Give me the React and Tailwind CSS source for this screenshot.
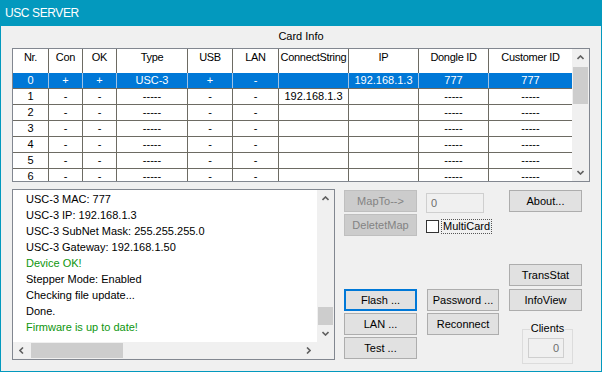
const FONT = "font-['Liberation_Sans',Arial,sans-serif]"

const COLS = [
  { label: 'Nr.', w: 'w-[36px]' },
  { label: 'Con', w: 'w-[34px]' },
  { label: 'OK', w: 'w-[34px]' },
  { label: 'Type', w: 'w-[71px]' },
  { label: 'USB', w: 'w-[45px]' },
  { label: 'LAN', w: 'w-[46px]' },
  { label: 'ConnectString', w: 'w-[70px]' },
  { label: 'IP', w: 'w-[70px]' },
  { label: 'Dongle ID', w: 'w-[70px]' },
  { label: 'Customer ID', w: 'w-[83px]' },
]

const ROWS = [
  ['0', '+', '+', 'USC-3', '+', '-', '', '192.168.1.3', '777', '777'],
  ['1', '-', '-', '-----', '-', '-', '192.168.1.3', '', '-----', '-----'],
  ['2', '-', '-', '-----', '-', '-', '', '', '-----', '-----'],
  ['3', '-', '-', '-----', '-', '-', '', '', '-----', '-----'],
  ['4', '-', '-', '-----', '-', '-', '', '', '-----', '-----'],
  ['5', '-', '-', '-----', '-', '-', '', '', '-----', '-----'],
  ['6', '-', '-', '-----', '-', '-', '', '', '-----', '-----'],
]

const LOG = [
  { t: 'USC-3 MAC: 777' },
  { t: 'USC-3 IP: 192.168.1.3' },
  { t: 'USC-3 SubNet Mask: 255.255.255.0' },
  { t: 'USC-3 Gateway: 192.168.1.50' },
  { t: 'Device OK!', ok: true },
  { t: 'Stepper Mode: Enabled' },
  { t: 'Checking file update...' },
  { t: 'Done.' },
  { t: 'Firmware is up to date!', ok: true },
]

function Chevron({ dir }) {
  const pts = {
    up: '0.5,4 3.5,1 6.5,4',
    down: '0.5,1 3.5,4 6.5,1',
    left: '4,0.5 1,3.5 4,6.5',
    right: '1,0.5 4,3.5 1,6.5',
  }[dir]
  const vert = dir === 'up' || dir === 'down'
  return (
    <svg width={vert ? 7 : 5} height={vert ? 5 : 7} viewBox={vert ? '0 0 7 5' : '0 0 5 7'}>
      <polyline points={pts} fill="none" stroke="#606060" strokeWidth="1.6" />
    </svg>
  )
}

function ArrowBox({ dir }) {
  return (
    <div className="w-[17px] h-[17px] shrink-0 flex items-center justify-center">
      <Chevron dir={dir} />
    </div>
  )
}

function Btn({ children, disabled, focus, className = '' }) {
  let look = 'bg-[#e1e1e1] border border-[#adadad] text-black'
  if (disabled) look = 'bg-[#cccccc] border border-[#bfbfbf] text-[#838383]'
  if (focus) look = 'bg-[#e1e1e1] border-2 border-[#0078d7] text-black'
  return (
    <div className={`h-[22px] flex items-center justify-center leading-[13px] whitespace-nowrap ${look} ${className}`}>
      {children}
    </div>
  )
}

export default function App() {
  return (
    <div className={`${FONT} text-[11px] text-black w-[602px] h-[372px] bg-[#f0f0f0] border-x border-b border-[#0399be] flex flex-col overflow-hidden`}>
      {/* Title bar */}
      <div className="h-[26px] shrink-0 bg-[#0399be] -mx-px flex items-center pl-[5px] text-white text-[12px] tracking-[-0.4px]">
        USC SERVER
      </div>

      <div className="px-[11px] flex flex-col">
        <div className="mt-[4px] h-[13px] leading-[13px] text-center">Card Info</div>

        {/* Card table */}
        <div className="mt-[5px] w-[578px] h-[134px] border border-[#828790] flex bg-white">
          <div className="flex-1 overflow-hidden flex flex-col">
            <div className="h-[24px] shrink-0 flex">
              {COLS.map((c, i) => (
                <div
                  key={c.label}
                  className={`${c.w} shrink-0 h-full pt-[2px] leading-[13px] text-center whitespace-nowrap overflow-hidden tracking-[-0.3px] ${i < 9 ? 'border-r border-[#6d6b63]' : ''}`}
                >
                  {c.label}
                </div>
              ))}
            </div>
            {ROWS.map((r, ri) => (
              <div
                key={ri}
                className={`h-[16px] shrink-0 flex border-b border-[#6d6b63] ${ri === 0 ? 'bg-[#0078d7] text-white' : ''}`}
              >
                {r.map((v, i) => (
                  <div
                    key={i}
                    className={`${COLS[i].w} shrink-0 h-full flex items-center justify-center whitespace-nowrap overflow-hidden leading-[13px] ${
                      i < 9 ? (ri === 0 ? 'border-r border-[#9fc2e6]' : 'border-r border-[#6d6b63]') : ''
                    }`}
                  >
                    {v}
                  </div>
                ))}
              </div>
            ))}
          </div>
          <div className="w-[17px] shrink-0 bg-[#f0f0f0] flex flex-col">
            <ArrowBox dir="up" />
            <div className="mt-[1px] ml-[1px] w-[15px] h-[37px] bg-[#cdcdcd]" />
            <div className="flex-1" />
            <ArrowBox dir="down" />
          </div>
        </div>

        {/* Bottom area */}
        <div className="mt-[7px] flex">
          {/* Log list */}
          <div className="w-[323px] h-[171px] shrink-0 border border-[#828790] bg-white flex flex-col">
            <div className="flex-1 flex min-h-0">
              <div className="flex-1 overflow-hidden pl-[13px] pt-[1px]">
                {LOG.map((l, i) => (
                  <div key={i} className={`h-[16px] leading-[16px] whitespace-nowrap ${l.ok ? 'text-[#0e960e]' : ''}`}>
                    {l.t}
                  </div>
                ))}
              </div>
              <div className="w-[17px] shrink-0 bg-[#f0f0f0] flex flex-col">
                <ArrowBox dir="up" />
                <div className="flex-1" />
                <div className="ml-[1px] w-[15px] h-[18px] bg-[#cdcdcd]" />
                <ArrowBox dir="down" />
              </div>
            </div>
            <div className="h-[17px] shrink-0 flex bg-[#f0f0f0]">
              <ArrowBox dir="left" />
              <div className="ml-[1px] mt-[1px] w-[92px] h-[15px] bg-[#cdcdcd]" />
              <div className="flex-1" />
              <ArrowBox dir="right" />
              <div className="w-[17px] shrink-0" />
            </div>
          </div>

          {/* Column A */}
          <div className="ml-[9px] w-[73px] flex flex-col">
            <Btn disabled className="mt-[1px]">MapTo--&gt;</Btn>
            <Btn disabled className="mt-[2px]">DeletetMap</Btn>
            <Btn focus className="mt-[53px]">Flash ...</Btn>
            <Btn className="mt-[2px]">LAN ...</Btn>
            <Btn className="mt-[2px]">Test ...</Btn>
          </div>

          {/* Column B */}
          <div className="ml-[9px] w-[73px] flex flex-col">
            <div className="mt-[4px] w-[58px] h-[20px] border border-[#cfcfcf] bg-[#f0f0f0] text-[#6d6d6d] pl-[4px] leading-[18px]">
              0
            </div>
            <div className="mt-[6px] flex items-center">
              <div className="w-[13px] h-[13px] border border-[#333333] bg-white shrink-0" />
              <div className="ml-[2px] h-[15px] px-[1px] border border-dotted border-[#555555] leading-[13px]">MultiCard</div>
            </div>
            <Btn className="mt-[55px] ml-[1px] w-[72px]">Password ...</Btn>
            <Btn className="mt-[2px] ml-[1px] w-[72px]">Reconnect</Btn>
          </div>

          {/* Column C */}
          <div className="ml-[10px] w-[73px] flex flex-col">
            <Btn className="mt-[1px]">About...</Btn>
            <Btn className="mt-[52px]">TransStat</Btn>
            <Btn className="mt-[3px]">InfoView</Btn>
            <div className="relative mt-[18px] ml-[13px] w-[51px] h-[35px] border border-[#dcdcdc]">
              <div className="absolute -top-[8px] left-0 right-0 flex justify-center">
                <span className="bg-[#f0f0f0] px-[1px] leading-[13px]">Clients</span>
              </div>
              <div className="mt-[8px] ml-[5px] w-[36px] h-[20px] border border-[#cfcfcf] text-[#6d6d6d] text-right pr-[4px] leading-[18px]">
                0
              </div>
            </div>
          </div>
        </div>
      </div>
    </div>
  )
}
